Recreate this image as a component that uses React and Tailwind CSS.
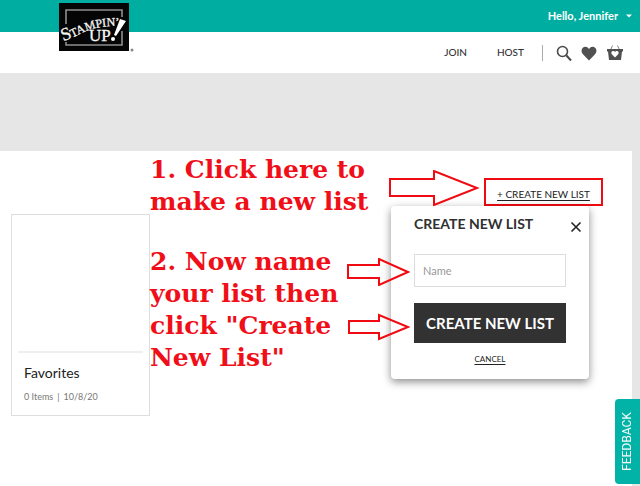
import React, { useState } from "react";

function Logo() {
  return (
    <svg viewBox="0 0 78 52" className="h-[52px] w-[78px]" role="img" aria-label="Stampin' Up!">
      <rect x="0" y="3" width="70" height="48" fill="#050505" />
      <path d="M7 24V10H63V17M7 42V45H63V31" fill="none" stroke="#8f8f8f" strokeWidth="1.6" />
      <path id="logo-arc" d="M4 41C20 37 28 25 62 26" fill="none" />
      <g fill="#f5f5f5" stroke="#f5f5f5" strokeWidth="0.3" fontFamily="Liberation Serif, serif">
        <text fontSize="18">
          <textPath href="#logo-arc">
            S<tspan fontSize="12">TAMPIN’</tspan>
          </textPath>
        </text>
        <text x="30" y="41" fontSize="17">
          UP
        </text>
      </g>
      <path d="M61 19L67 21L57 36L55 35Z" fill="#fff" />
      <circle cx="54" cy="39" r="2" fill="#fff" />
      <circle cx="73" cy="50" r="1.5" fill="#888" />
    </svg>
  );
}

function Arrow({ className, points, viewBox }) {
  return (
    <svg viewBox={viewBox} className={className} aria-hidden="true">
      <polygon points={points} fill="none" stroke="#f00b12" strokeWidth="2" />
    </svg>
  );
}

function Header() {
  return (
    <header className="relative">
      <div className="flex h-8 items-center justify-end bg-[#00ada1] pr-2">
        <button className="flex items-center gap-2 text-[11px] font-bold text-white">
          Hello, Jennifer
          <svg viewBox="0 0 6 4" className="h-1 w-1.5">
            <path d="M0 0.5H6L3 3.5Z" fill="currentColor" />
          </svg>
        </button>
      </div>
      <a href="#home" className="absolute left-[59px] top-0">
        <Logo />
      </a>
      <nav className="flex h-[41px] items-center justify-end bg-white pr-[17px] text-[10px] font-medium text-[#333]">
        <a href="#join" className="mr-[30px]">JOIN</a>
        <a href="#host" className="mr-[18px]">HOST</a>
        <span className="mr-3 h-4 w-px bg-[#aaa]" />
        <button aria-label="Search" className="mr-2">
          <svg viewBox="0 0 18 18" className="size-[18px]" fill="none" stroke="#4a4a4a">
            <circle cx="7.5" cy="7.5" r="5" strokeWidth="1.6" />
            <path d="M11.2 11.3L16 16.5" strokeWidth="2" />
          </svg>
        </button>
        <button aria-label="Wish list" className="mr-2.5">
          <svg viewBox="0 0 16 16" className="size-4">
            <path d="M8 15.5L2.2 9.5C-1.2 5.7 1.3 1.8 4.3 1.8C6.3 1.8 7.4 2.9 8 4.2C8.6 2.9 9.7 1.8 11.7 1.8C14.7 1.8 17.2 5.7 13.8 9.5Z" fill="#505050" />
          </svg>
        </button>
        <button aria-label="Shopping bag">
          <svg viewBox="0 0 16 16" className="size-4">
            <path d="M5.5 0.5L3.5 5M10.5 0.5L12.5 5" stroke="#888" strokeWidth="1" />
            <path d="M0 4H16V6.5H15L14 15H2L1 6.5H0Z" fill="#505050" />
            <path d="M8 12.5L4.8 9.2C3.5 7.5 5 6 6.3 6C7.2 6 7.7 6.6 8 7.2C8.3 6.6 8.8 6 9.7 6C11 6 12.5 7.5 11.2 9.2Z" fill="#fff" />
          </svg>
        </button>
      </nav>
    </header>
  );
}

function ListCard({ name, items, date }) {
  return (
    <article className="mt-[63px] h-[202px] w-[139px] shrink-0 border border-[#dedede] px-1.5">
      <div className="h-[138px] border-b-2 border-[#efefef]" />
      <div className="px-1.5 pt-2.5">
        <h2 className="text-sm leading-5 text-[#222]">{name}</h2>
        <p className="mt-1.5 flex gap-1 text-[9px] leading-4 text-[#777]">
          <span>{items} Items</span>
          <span>|</span>
          <span>{date}</span>
        </p>
      </div>
    </article>
  );
}

function CreateListDialog() {
  const [name, setName] = useState("");

  return (
    <form
      role="dialog"
      aria-labelledby="create-title"
      onSubmit={(e) => e.preventDefault()}
      className="absolute right-[43px] top-[55px] flex w-[198px] flex-col rounded-sm bg-white px-[23px] pb-3 shadow-[0_3px_9px_rgba(0,0,0,0.45)]"
    >
      <div className="-mr-4 flex justify-between">
        <h2 id="create-title" className="pt-2 text-sm font-bold text-[#303030]">
          CREATE NEW LIST
        </h2>
        <button type="button" aria-label="Close" className="pt-3.5">
          <svg viewBox="0 0 12 12" className="size-3">
            <path d="M1.5 1.5L10.5 10.5M10.5 1.5L1.5 10.5" stroke="#222" strokeWidth="1.6" />
          </svg>
        </button>
      </div>
      <input
        aria-label="Name"
        placeholder="Name"
        value={name}
        onChange={(e) => setName(e.target.value)}
        className="mt-5 h-[33px] w-full border border-[#ddd] px-2 text-[11px] placeholder:text-[#999]"
      />
      <button className="mt-4 h-10 w-full whitespace-nowrap bg-[#323232] text-[15px] font-bold text-white">
        CREATE NEW LIST
      </button>
      <button type="button" className="mt-2 self-center text-[8px] leading-4 text-[#222] underline underline-offset-2">
        CANCEL
      </button>
    </form>
  );
}

export default function App() {
  return (
    <div className="flex min-h-screen flex-col bg-[#e6e6e6] font-['Lato',sans-serif]">
      <Header />
      <main className="relative mr-2 mt-[78px] flex grow items-start justify-between bg-white pl-[11px]">
        <ListCard name="Favorites" items={0} date="10/8/20" />

        <div className="grow whitespace-nowrap pt-[3px] font-['DejaVu_Serif',serif] text-[25px] font-bold leading-8 text-[#f00f18]">
          <p>
            1. Click here to
            <br />
            make a new list
          </p>
          <p className="mt-7">
            2. Now name
            <br />
            your list then
            <br />
            click "Create
            <br />
            New List"
          </p>
        </div>

        <div className="mr-[29px] mt-[27px] flex h-7 w-[119px] shrink-0 items-center justify-center border-2 border-[#f00b12] pt-1">
          <a href="#create" className="whitespace-nowrap text-[10px] text-[#222] underline underline-offset-2">
            + CREATE NEW LIST
          </a>
        </div>

        <CreateListDialog />

        <Arrow
          viewBox="0 0 91 36"
          points="1,9 45,9 45,1 88,18 45,35 45,26 1,26"
          className="absolute right-[152px] top-[19px] h-9 w-[91px]"
        />
        <Arrow
          viewBox="0 0 63 28"
          points="1,7 32,7 32,1 61,14 32,27 32,20 1,20"
          className="absolute right-[222px] top-[107px] h-7 w-[63px]"
        />
        <Arrow
          viewBox="0 0 63 28"
          points="2,8 32,8 32,2 61,14 32,26 32,20 2,20"
          className="absolute right-[222px] top-[162px] h-7 w-[63px]"
        />
      </main>
      <button className="fixed bottom-0.5 right-0 flex h-[85px] w-[25px] rotate-180 items-center justify-center rounded-r-sm bg-[#00b3a6] font-['Roboto',sans-serif] text-xs text-white [writing-mode:vertical-rl]">
        FEEDBACK
      </button>
    </div>
  );
}
